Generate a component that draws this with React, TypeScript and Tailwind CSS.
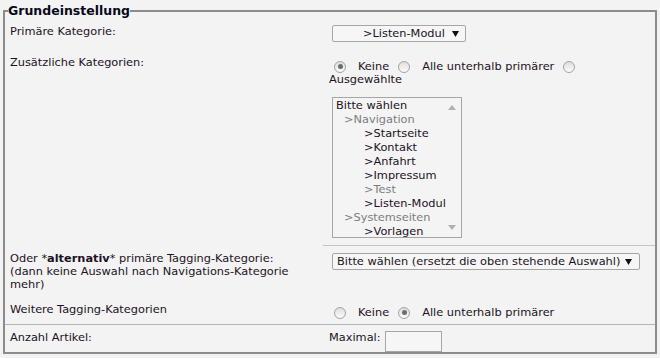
const font = { fontFamily: '"DejaVu Sans", Verdana, sans-serif' };

const Radio = ({ checked = false, className = "" }: { checked?: boolean; className?: string }) => (
  <span
    className={`inline-flex size-[12px] shrink-0 items-center justify-center rounded-full border border-[#a3a3a3] bg-gradient-to-b from-[#dedede] to-[#fbfbfb] ${className}`}
  >
    {checked && <span className="size-[5px] rounded-full bg-[#6d6d6d]" />}
  </span>
);

const Arrow = () => (
  <svg width="7" height="6" viewBox="0 0 7 6" className="ml-auto shrink-0">
    <path d="M0 0h7L3.5 6z" fill="#111" />
  </svg>
);

const listItems = [
  { label: "Bitte wählen", indent: "pl-[3px]", muted: false },
  { label: ">Navigation", indent: "pl-[11px]", muted: true },
  { label: ">Startseite", indent: "pl-[31px]", muted: false },
  { label: ">Kontakt", indent: "pl-[31px]", muted: false },
  { label: ">Anfahrt", indent: "pl-[31px]", muted: false },
  { label: ">Impressum", indent: "pl-[31px]", muted: false },
  { label: ">Test", indent: "pl-[31px]", muted: true },
  { label: ">Listen-Modul", indent: "pl-[31px]", muted: false },
  { label: ">Systemseiten", indent: "pl-[11px]", muted: true },
  { label: ">Vorlagen", indent: "pl-[31px]", muted: false },
];

export default function App() {
  return (
    <div
      className="h-[358px] w-[660px] overflow-hidden bg-[#f3f3f3] text-[11.35px] leading-[13px] text-[#1c1224]"
      style={font}
    >
      <fieldset className="mt-[4px] ml-[3px] min-w-0 w-[654px] border-2 border-[#8c8c8c] p-0">
        <legend className="ml-[3px] p-0 text-[12.5px] font-bold leading-[13px] text-[#08081a]">
          Grundeinstellung
        </legend>

        <div className="grid grid-cols-[318px_1fr]">
          {/* Primäre Kategorie */}
          <div className="h-[33px] pt-[8px] pl-[5px]">Primäre Kategorie:</div>
          <div className="pt-[8px] pl-[9px]">
            <div className="flex h-[17px] w-[134px] items-center rounded-[2px] border border-[#a6a6a6] bg-[#f6f6f6] pr-[6px] pl-[30px]">
              <span className="whitespace-nowrap">&gt;Listen-Modul</span>
              <Arrow />
            </div>
          </div>

          {/* Zusätzliche Kategorien */}
          <div className="pt-[6px] pl-[5px]">Zusätzliche Kategorien:</div>
          <div className="border-b border-[#c4c4c4] pt-[10px] pb-[7px] pl-[6px]">
            <div className="flex h-[13px] items-center">
              <Radio checked className="ml-[5px] mr-[12px]" />
              <span>Keine</span>
              <Radio className="ml-[9px] mr-[12px]" />
              <span>Alle unterhalb primärer</span>
              <Radio className="ml-[9px]" />
            </div>
            <div className="h-[13px]">Ausgewählte</div>
            <div className="relative mt-[11px] ml-[3px] h-[141px] w-[130px] border border-[#a6a6a6] bg-[#f4f4f4]">
              {listItems.map((item) => (
                <div
                  key={item.label}
                  className={`h-[14px] whitespace-nowrap leading-[14px] ${item.indent} ${item.muted ? "text-[#7d7d7d]" : ""}`}
                >
                  {item.label}
                </div>
              ))}
              <svg width="8" height="5" viewBox="0 0 8 5" className="absolute top-[7px] right-[5px]">
                <path d="M0 5h8L4 0z" fill="#b0b0b0" />
              </svg>
              <svg width="8" height="5" viewBox="0 0 8 5" className="absolute right-[5px] bottom-[7px]">
                <path d="M0 0h8L4 5z" fill="#b0b0b0" />
              </svg>
            </div>
          </div>

          {/* Tagging-Kategorie */}
          <div className="pt-[6px] pl-[5px] pb-[1px]">
            <div className="whitespace-nowrap">
              Oder *<b>alternativ</b>* primäre Tagging-Kategorie:
            </div>
            <div className="whitespace-nowrap">(dann keine Auswahl nach Navigations-Kategorie</div>
            <div>mehr)</div>
          </div>
          <div className="pt-[7px] pl-[9px]">
            <div className="flex h-[17px] w-[308px] items-center rounded-[2px] border border-[#a6a6a6] bg-[#f6f6f6] pr-[7px] pl-[4px]">
              <span className="whitespace-nowrap">Bitte wählen (ersetzt die oben stehende Auswahl)</span>
              <Arrow />
            </div>
          </div>

          {/* Weitere Tagging-Kategorien */}
          <div className="border-b border-[#b4b4b4] pt-[11px] pb-[8px] pl-[5px]">Weitere Tagging-Kategorien</div>
          <div className="border-b border-[#b4b4b4] pt-[14px] pb-[5px] pl-[6px]">
            <div className="flex h-[13px] items-center">
              <Radio className="ml-[5px] mr-[12px]" />
              <span>Keine</span>
              <Radio checked className="ml-[9px] mr-[12px]" />
              <span>Alle unterhalb primärer</span>
            </div>
          </div>

          {/* Anzahl Artikel */}
          <div className="pt-[6px] pl-[5px]">Anzahl Artikel:</div>
          <div className="flex items-start gap-[4px] pt-[6px] pl-[6px]">
            <span>Maximal:</span>
            <span className="h-[21px] w-[57px] border border-[#a6a6a6] bg-[#f6f6f6]" />
          </div>
        </div>
      </fieldset>
    </div>
  );
}
